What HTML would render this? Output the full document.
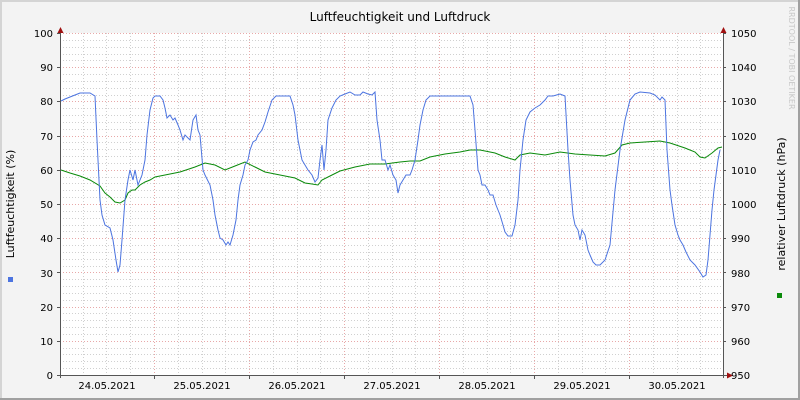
<!DOCTYPE html><html><head><style>body{margin:0}svg{display:block}text{font-family:"DejaVu Sans","Liberation Sans",sans-serif}</style></head><body>
<svg width="800" height="400" xmlns="http://www.w3.org/2000/svg">
<rect width="800" height="400" fill="#a0a0a0"/>
<rect width="798" height="398" fill="#d4d4d4"/>
<rect x="2" y="2" width="796" height="396" fill="#f3f3f3"/>
<rect x="60" y="33" width="663" height="342" fill="#fff"/>
<g shape-rendering="crispEdges" stroke-width="1">
<path stroke="#d0d0d0" stroke-dasharray="1,2" fill="none" d="M60 368.5H723M60 361.5H723M60 354.5H723M60 348.5H723M60 334.5H723M60 327.5H723M60 320.5H723M60 313.5H723M60 300.5H723M60 293.5H723M60 286.5H723M60 279.5H723M60 266.5H723M60 259.5H723M60 252.5H723M60 245.5H723M60 231.5H723M60 225.5H723M60 218.5H723M60 211.5H723M60 197.5H723M60 190.5H723M60 183.5H723M60 177.5H723M60 163.5H723M60 156.5H723M60 149.5H723M60 142.5H723M60 129.5H723M60 122.5H723M60 115.5H723M60 108.5H723M60 95.5H723M60 88.5H723M60 81.5H723M60 74.5H723M60 60.5H723M60 54.5H723M60 47.5H723M60 40.5H723
M83.5 33V375M106.5 33V375M130.5 33V375M178.5 33V375M202.5 33V375M225.5 33V375M273.5 33V375M297.5 33V375M320.5 33V375M368.5 33V375M392.5 33V375M415.5 33V375M463.5 33V375M487.5 33V375M510.5 33V375M558.5 33V375M582.5 33V375M605.5 33V375M653.5 33V375M677.5 33V375M700.5 33V375"/>
<path stroke="#e8a8a8" stroke-dasharray="1,2" fill="none" d="M60 341.5H723M60 307.5H723M60 272.5H723M60 238.5H723M60 204.5H723M60 170.5H723M60 136.5H723M60 101.5H723M60 67.5H723M60 33.5H723M154.5 33V375M249.5 33V375M344.5 33V375M439.5 33V375M534.5 33V375M629.5 33V375"/>
<path stroke="#555" fill="none" d="M57 341.5H60M57 307.5H60M57 272.5H60M57 238.5H60M57 204.5H60M57 170.5H60M57 136.5H60M57 101.5H60M57 67.5H60M57 33.5H60M723 341.5H726M723 307.5H726M723 272.5H726M723 238.5H726M723 204.5H726M723 170.5H726M723 136.5H726M723 101.5H726M723 67.5H726M723 33.5H726M154.5 375V379M249.5 375V379M344.5 375V379M439.5 375V379M534.5 375V379M629.5 375V379"/>
<line x1="60.5" y1="30" x2="60.5" y2="378" stroke="#555"/>
<line x1="723.5" y1="30" x2="723.5" y2="378" stroke="#555"/>
<line x1="57" y1="375.5" x2="728" y2="375.5" stroke="#555"/>
</g>
<polygon points="57.5,33 63.5,33 60.5,27" fill="#a01010"/>
<polygon points="720.5,33 726.5,33 723.5,27" fill="#a01010"/>
<polygon points="727,372.5 727,378.5 733,375.5" fill="#a01010"/>
<polyline fill="none" stroke="#0a8a0a" stroke-width="1" points="61,170 70,173 80,176 90,180 100,186 105,193 110,197 115,202 120,203 125,200 128,193 132,190 135,190 140,185 145,182 150,180 155,177 165,175 180,172 195,167 205,163 215,165 225,170 235,166 245,162 255,167 265,172 280,175 295,178 305,183 312,184 318,185 322,180 330,176 340,171 355,167 370,164 385,164 400,162 410,161 420,161 430,157 445,154 460,152 470,150 480,150 495,153 505,157 515,160 520,155 530,153 545,155 560,152 575,154 590,155 605,156 615,153 622,145 630,143 645,142 660,141 670,143 685,148 695,152 700,157 705,158 712,153 718,148 722,147"/>
<polyline fill="none" stroke="#4c74e0" stroke-width="1" points="61,101 65,99 70,97 75,95 80,93 90,93 95,96 97,140 100,200 102,215 105,225 110,228 113,240 116,260 118,272 120,265 122,240 125,200 128,180 130,170 133,180 135,170 138,185 142,175 145,160 147,135 150,110 153,98 155,96 160,96 163,100 165,108 167,118 170,115 173,120 175,118 178,125 180,130 183,140 185,135 190,140 193,120 196,115 198,130 200,135 203,170 205,175 210,185 213,200 215,215 218,230 220,238 223,240 226,245 228,242 230,245 233,235 236,220 238,200 240,185 243,175 245,165 248,160 250,150 253,142 256,140 258,135 262,130 265,122 268,112 272,100 276,96 290,96 293,105 295,115 298,140 302,160 305,165 308,170 312,175 315,182 318,178 320,160 322,145 324,170 326,150 328,120 332,108 336,100 340,96 345,94 350,92 355,95 360,95 363,92 368,94 372,95 375,92 377,120 380,140 382,160 385,160 388,170 390,165 393,175 396,180 398,193 400,185 403,180 406,175 410,175 412,170 415,160 418,140 420,125 423,110 426,100 430,96 470,96 473,105 475,130 478,170 480,175 482,185 485,185 488,190 490,195 493,195 496,205 498,210 500,215 503,225 505,232 508,236 512,236 515,225 518,200 520,170 523,140 526,120 530,112 535,108 540,105 545,100 548,96 553,96 560,94 565,96 568,150 570,180 573,215 575,225 578,230 580,240 582,230 585,235 588,250 590,255 593,262 596,265 600,265 605,260 610,245 615,190 620,150 625,120 630,100 635,94 640,92 650,93 655,95 660,100 662,97 665,100 667,150 670,190 672,205 675,225 678,235 680,240 683,245 686,252 690,260 695,265 700,272 703,277 706,275 708,260 710,235 712,210 714,190 716,175 718,160 720,150"/>
<g font-size="10" fill="#000" text-anchor="end">
<text x="53" y="37">100</text><text x="53" y="71">90</text><text x="53" y="105">80</text><text x="53" y="140">70</text><text x="53" y="174">60</text><text x="53" y="208">50</text><text x="53" y="242">40</text><text x="53" y="277">30</text><text x="53" y="311">20</text><text x="53" y="345">10</text><text x="53" y="379">0</text>
</g>
<g font-size="10" fill="#000">
<text x="731" y="37">1050</text><text x="731" y="71">1040</text><text x="731" y="105">1030</text><text x="731" y="140">1020</text><text x="731" y="174">1010</text><text x="731" y="208">1000</text><text x="731" y="242">990</text><text x="731" y="277">980</text><text x="731" y="311">970</text><text x="731" y="345">960</text><text x="731" y="379">950</text>
</g>
<g font-size="10" fill="#000" text-anchor="middle">
<text x="107" y="389">24.05.2021</text><text x="202" y="389">25.05.2021</text><text x="297" y="389">26.05.2021</text><text x="392" y="389">27.05.2021</text><text x="487" y="389">28.05.2021</text><text x="582" y="389">29.05.2021</text><text x="677" y="389">30.05.2021</text>
</g>
<text x="400" y="21" font-size="12" text-anchor="middle" fill="#000">Luftfeuchtigkeit und Luftdruck</text>
<text transform="translate(14,204) rotate(-90)" font-size="11" text-anchor="middle" fill="#000">Luftfeuchtigkeit (%)</text>
<text transform="translate(785,204) rotate(-90)" font-size="11" text-anchor="middle" fill="#000">relativer Luftdruck (hPa)</text>
<text transform="translate(789,58) rotate(90)" font-size="8" text-anchor="middle" fill="#c8c8c8">RRDTOOL / TOBI OETIKER</text>
<rect x="8" y="277" width="5" height="5" fill="#4c74e0"/>
<rect x="777" y="293" width="5" height="5" fill="#0a8a0a"/>
</svg>
</body></html>
